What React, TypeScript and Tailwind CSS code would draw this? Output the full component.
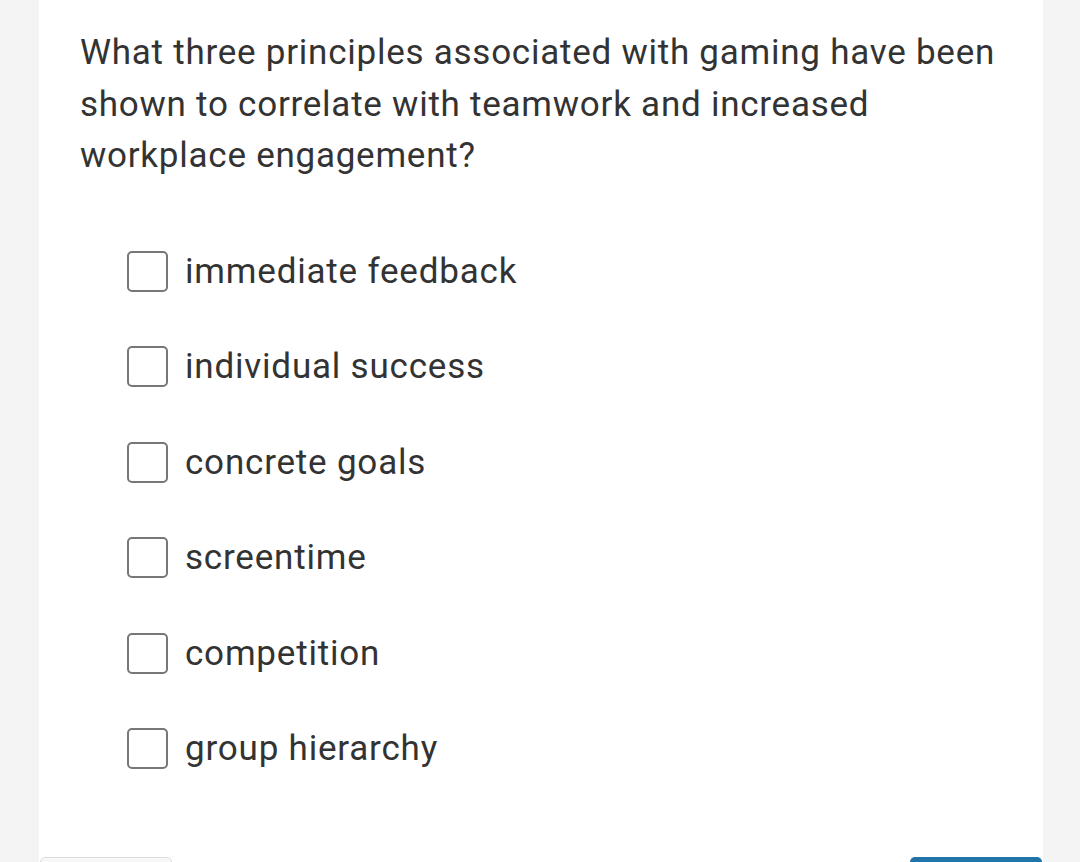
import React from "react";

const options = [
  "immediate feedback",
  "individual success",
  "concrete goals",
  "screentime",
  "competition",
  "group hierarchy",
];

export default function App() {
  return (
    <div
      className="w-[1080px] h-[862px] overflow-hidden bg-[#f4f4f4] flex"
      style={{ fontFamily: "Roboto, 'Noto Sans', sans-serif" }}
    >
      <div className="ml-[39px] w-[1004px] h-full bg-white flex flex-col relative">
        <div className="pl-[41px] pr-[36px] pt-[27px] text-[35px] tracking-[0.75px] leading-[51.5px] text-[#333333]">
          What three principles associated with gaming have been shown to correlate with teamwork and increased workplace engagement?
        </div>
        <div className="flex flex-col pl-[88px] mt-[69px] gap-[54.5px]">
          {options.map((o) => (
            <label key={o} className="flex items-center gap-[17px] h-[41px]">
              <span className="w-[41px] h-[41px] shrink-0 border-2 border-[#777777] rounded-[5px] bg-white" />
              <span className="text-[35px] tracking-[0.8px] text-[#333333] leading-[41px]">{o}</span>
            </label>
          ))}
        </div>
        <div className="absolute left-[1px] top-[857px] w-[132px] h-[30px] rounded-[5px] border border-[#dddddd] bg-[#f7f7f7]" />
        <div className="absolute right-[1px] top-[857px] w-[132px] h-[30px] rounded-[5px] bg-[#2074a8]" />
      </div>
    </div>
  );
}
